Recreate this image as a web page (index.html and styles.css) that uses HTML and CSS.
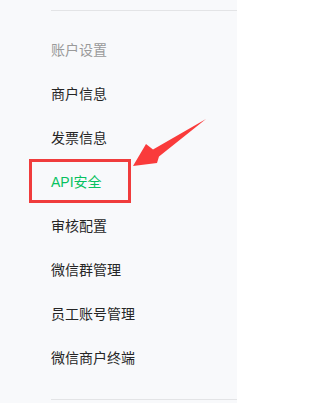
FILE: index.html
```html
<!DOCTYPE html>
<html lang="zh">
<head>
<meta charset="utf-8">
<link rel="stylesheet" href="styles.css">
</head>
<body>
<div class="page">
  <aside class="sidebar">
    <div class="rule"></div>
    <div class="group-title">账户设置</div>
    <ul class="menu">
      <li class="item">商户信息</li>
      <li class="item">发票信息</li>
      <li class="item active">API安全</li>
      <li class="item">审核配置</li>
      <li class="item">微信群管理</li>
      <li class="item">员工账号管理</li>
      <li class="item">微信商户终端</li>
    </ul>
    <div class="rule bottom"></div>
  </aside>
  <div class="highlight"></div>
  <svg class="arrow" width="296" height="403" viewBox="0 0 296 403">
    <polygon points="133,166 146,144 153,149.5 206,119 159,156.5 157,163" fill="#fa3b3b"/>
  </svg>
</div>
</body>
</html>
```
FILE: styles.css
```css
html, body {
  margin: 0;
  padding: 0;
  background: #ffffff;
}
.page {
  position: relative;
  width: 296px;
  height: 403px;
  overflow: hidden;
  font-family: "Liberation Sans", "Noto Sans CJK SC", sans-serif;
}
.sidebar {
  width: 237px;
  height: 403px;
  background: #f8f9fb;
  padding-left: 51px;
  box-sizing: border-box;
  padding-top: 10px;
}
.rule {
  height: 1px;
  background: #e3e4e6;
}
.group-title {
  margin-top: 17px;
  height: 44px;
  line-height: 44px;
  font-size: 14px;
  color: #9a9a9a;
}
.menu {
  list-style: none;
  margin: 0;
  padding: 0;
}
.item {
  height: 44px;
  line-height: 44px;
  font-size: 14px;
  color: #262626;
}
.item.active {
  color: #07c160;
}
.rule.bottom {
  margin-top: 19px;
}
.highlight {
  position: absolute;
  left: 29px;
  top: 159px;
  width: 96px;
  height: 38px;
  border: 3px solid #f03c3c;
}
.arrow {
  position: absolute;
  left: 0;
  top: 0;
}
```
